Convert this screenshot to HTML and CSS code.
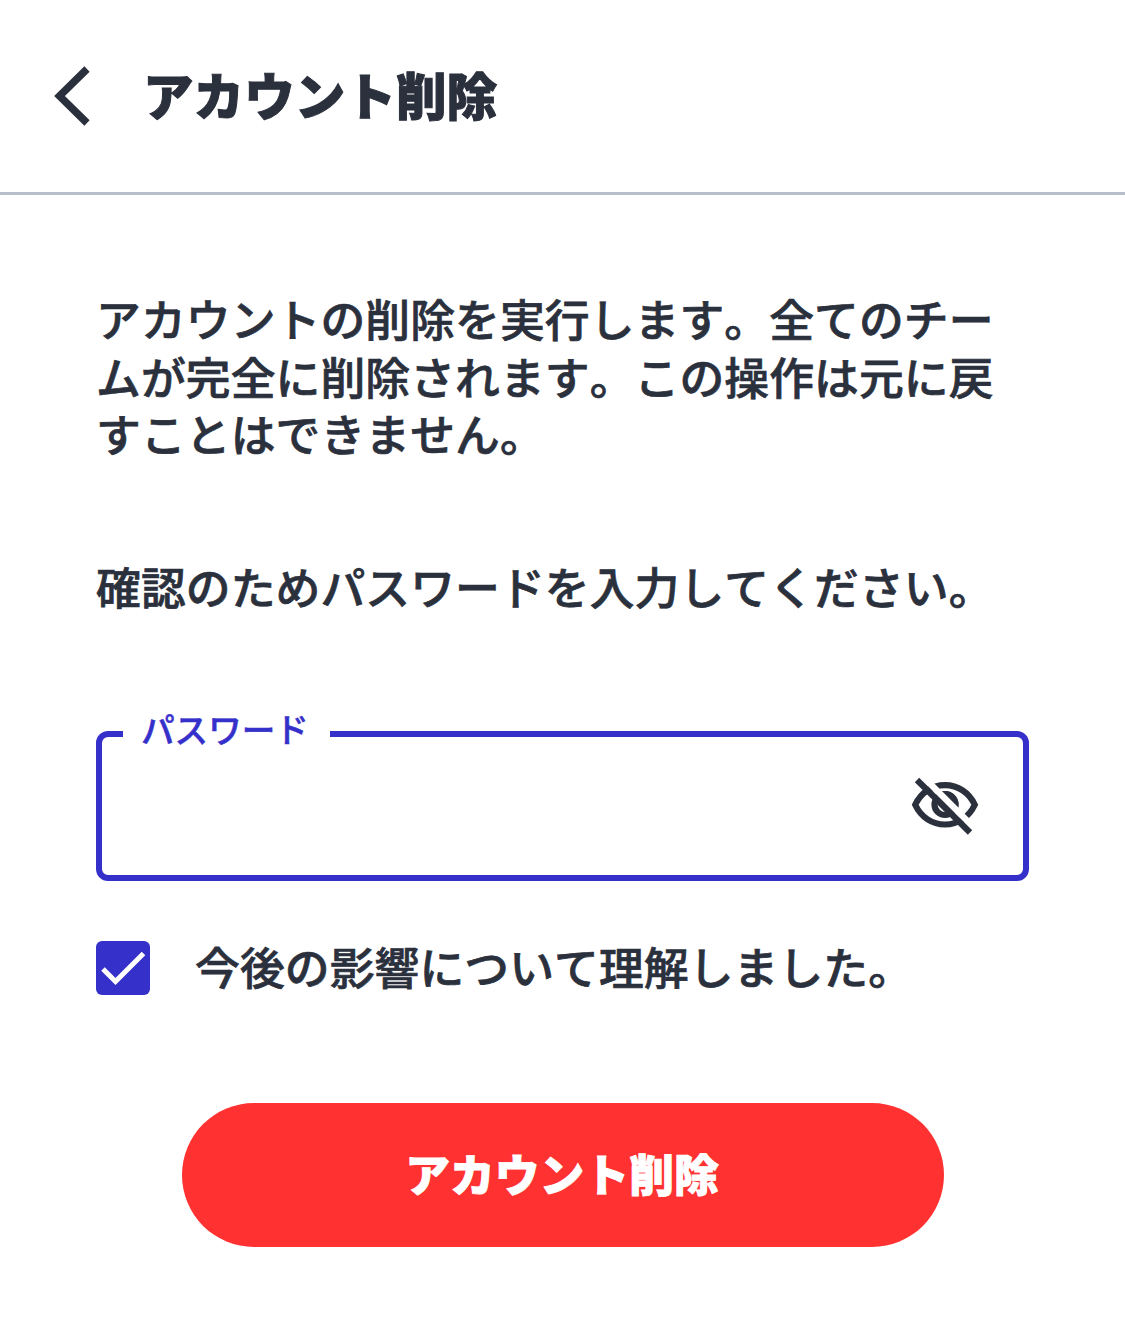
FILE: index.html
```html
<!DOCTYPE html>
<html lang="ja">
<head>
    <meta charset="UTF-8">
    <meta name="viewport" content="width=device-width, initial-scale=1.0">
    <title>アカウント削除</title>
    <link rel="stylesheet" href="styles.css">
</head>
<body>
    <header class="header">
        <a class="back" href="#" aria-label="戻る">
            <svg width="36" height="60" viewBox="0 0 36 60"><path d="M33 3L5.5 30L33 57" /></svg>
        </a>
        <h1 class="title">アカウント削除</h1>
    </header>
    <main class="content">
        <p class="text">アカウントの削除を実行します。全てのチー<br>ムが完全に削除されます。この操作は元に戻<br>すことはできません。</p>
        <p class="text confirm">確認のためパスワードを入力してください。</p>
        <fieldset class="field">
            <legend>パスワード</legend>
            <input type="password" aria-label="パスワード">
            <button class="toggle" type="button" aria-label="パスワードを表示">
                <svg width="66" height="56" viewBox="0 0 66 56">
                    <path class="line" d="M3.2 26.8C9 14.5 20 7.2 33 7.2S57 14.5 62.8 26.8C57 39.1 46 46.5 33 46.5S9 39.1 3.2 26.8Z" />
                    <circle class="line" cx="33" cy="26.5" r="10.5" />
                    <path class="pupil" d="M23.4 16.9A13.5 13.5 0 0 1 42.6 36.1Z" />
                    <path class="gap" d="M6.8 -5.5L64.8 52.5" />
                    <path class="line" d="M5 2L58 54.5" />
                </svg>
            </button>
        </fieldset>
        <label class="check">
            <input type="checkbox" checked>
            <span class="box"><svg width="54" height="54" viewBox="0 0 54 54"><path d="M7 28L19.5 40.5L47.5 12.5" /></svg></span>
            <span class="check-label">今後の影響について理解しました。</span>
        </label>
        <button class="delete" type="button">アカウント削除</button>
    </main>
</body>
</html>
```

FILE: styles.css
```css
* {
    box-sizing: border-box;
}
body {
    margin: 0;
    background-color: #fff;
    color: #2b303d;
    font-family: "Noto Sans CJK JP", sans-serif;
    font-kerning: none;
}
.header {
    display: flex;
    align-items: center;
    height: 195px;
    padding: 0 54px;
    border-bottom: 3px solid #b8bdcb;
}
.back {
    display: flex;
    width: 36px;
    margin-right: 53px;
}
.back path {
    fill: none;
    stroke: #2b303d;
    stroke-width: 7.5;
}
.title {
    margin: 0;
    padding-bottom: 4px;
    font-size: 50.6px;
    font-weight: 900;
    line-height: 60px;
    -webkit-text-stroke: 1px #2b303d;
}
.content {
    padding: 94px 96px 0;
}
.text {
    margin: 0;
    font-size: 44.8px;
    font-weight: 500;
    line-height: 57.5px;
    letter-spacing: 0.08px;
    white-space: nowrap;
    -webkit-text-stroke: 0.7px #2b303d;
}
.confirm {
    margin-top: 95px;
}
.field {
    display: flex;
    align-items: center;
    width: 933px;
    height: 173px;
    margin: 94px 0 0;
    padding: 0 45px 0 39px;
    border: 6px solid #3630cb;
    border-radius: 12px;
}
.field legend {
    margin-left: -18px;
    padding: 0 21px 10px 18px;
    color: #3630cb;
    font-size: 33.6px;
    font-weight: 500;
    line-height: 42px;
    -webkit-text-stroke: 0.5px #3630cb;
}
.field input {
    flex: 1;
    min-width: 0;
    height: 80px;
    border: none;
    outline: none;
    font-size: 44px;
}
.toggle {
    display: flex;
    margin-bottom: 24px;
    padding: 0;
    border: none;
    background: none;
}
.toggle svg {
    overflow: visible;
}
.line {
    fill: none;
    stroke: #2b303d;
    stroke-width: 6.2;
}
.pupil {
    fill: #2b303d;
}
.gap {
    stroke: #fff;
    stroke-width: 6.5;
}
.check {
    display: flex;
    align-items: center;
    margin-top: 60px;
}
.check input {
    position: absolute;
    opacity: 0;
}
.box {
    width: 54px;
    height: 54px;
    border-radius: 6px;
    background-color: #3630cb;
}
.box path {
    fill: none;
    stroke: #fff;
    stroke-width: 5;
}
.check-label {
    height: 54px;
    margin-left: 45px;
    font-size: 44.8px;
    font-weight: 500;
    line-height: 49px;
    letter-spacing: 0.08px;
    -webkit-text-stroke: 0.7px #2b303d;
}
.delete {
    display: block;
    width: 762px;
    height: 144px;
    margin: 108px auto 0;
    padding: 0 1px 5px 0;
    border: none;
    border-radius: 72px;
    background-color: #ff3131;
    color: #fff;
    font-family: inherit;
    font-size: 44.8px;
    font-weight: 900;
    font-kerning: none;
    -webkit-text-stroke: 0.9px #fff;
}
```
